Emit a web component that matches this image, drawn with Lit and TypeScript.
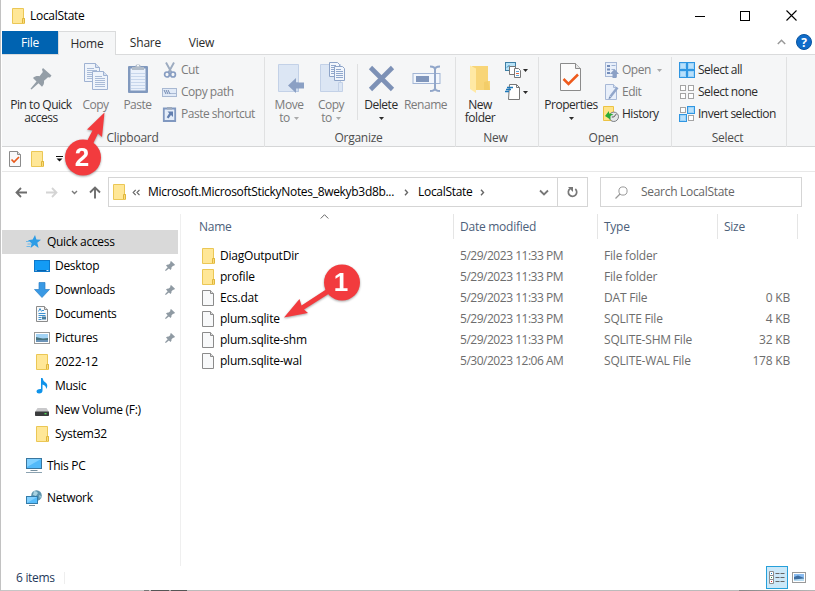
import { LitElement, html, svg, css, nothing } from "lit";
import { customElement, property } from "lit/decorators.js";

const pic = (w: number, h: number, body: unknown) =>
  html`<svg width=${w} height=${h} viewBox="0 0 ${w} ${h}">${body}</svg>`;

const sheet = (x: number, y: number) => svg`
  <path d="M${x + 0.5} ${y + 0.5}h11l4 4v14h-15z" fill="#eff4fb" stroke="#9fb2d2"/>
  <path d="M${x + 11.5} ${y + 0.5}v4h4" fill="#d5dfef" stroke="#9fb2d2"/>
  <path d="M${x + 3} ${y + 5.5}h7M${x + 3} ${y + 7.5}h10M${x + 3} ${y + 9.5}h10M${x + 3} ${y + 11.5}h10M${x + 3} ${y + 13.5}h10M${x + 3} ${y + 15.5}h10" stroke="#a9bbd7"/>`;

const smallPage = (body: unknown = nothing) => svg`
  <path d="M.5.5h8l3 3v12H.5z" fill="#f8f9fa" stroke="#8b8b8b"/>
  <path d="M8.500 .5v3h3" fill="#ddd" stroke="#8b8b8b"/>${body}`;

const bluePage = (x: number, y: number) => svg`
  <path d="M${x + 0.5} ${y + 0.5}h8l2 2v12h-10z" fill="#f2f6fc" stroke="#8ea4c8"/>
  <path d="M${x + 2} ${y + 3.5}h5M${x + 2} ${y + 5.5}h7M${x + 2} ${y + 7.5}h7M${x + 2} ${y + 9.5}h7M${x + 2} ${y + 11.5}h7" stroke="#91a8cc"/>`;

const tile = (x: number, y: number, on: boolean) => on
  ? svg`<rect x=${x + 0.5} y=${y + 0.5} width="7" height="7" fill="#b9e0fb" stroke="#2f96e2"/><rect x=${x + 1.5} y=${y + 1.5} width="5" height="5" fill="none" stroke="#8ccaf6" stroke-width=".6"/>`
  : svg`<rect x=${x + 1.5} y=${y + 1.5} width="5" height="5" fill="#fff" stroke="#a4a4a4"/>`;

const icons: Record<string, unknown> = {
  folder: pic(13, 16, svg`
    <path d="M.5.5h11v10h1v5H.5z" fill="#ffe797" stroke="#ebc755"/>
    <path d="M10.500 15v-4.500h2V15" fill="#fbdc7c" stroke="#dfb63c"/>`),
  file: pic(12, 16, smallPage()),
  propsSmall: pic(12, 16, smallPage(svg`<path d="M2.500 8.500l2.500 2.500 5-5" fill="none" stroke="#e9591b" stroke-width="1.700"/>`)),
  pinBig: pic(32, 32, svg`
    <path d="M18 6l8.500 7.500-1.500 2-2-.2-4 3.500c.4 2.500-.5 4.500-2 6l-3.500-3.500L6.500 27.500l-1-.8L11.500 19.500 8 16c2-1.800 4-2.300 6.500-1.800L17.800 10l-.8-2.500z" fill="#949ea7"/>`),
  pin: pic(10, 10, svg`
    <path d="M6 0l4 3.700-1 1.100-.8-.1L6.500 6.300c.2 1-.2 2-.9 2.700L3.900 7.400.8 10 0 9.300 2.700 6.200 1 4.500c.8-.8 1.700-1.100 2.800-.9L5.400 1.900 5.200 1z" fill="#8f9aa3"/>`),
  copy: pic(32, 32, svg`${sheet(4, 1)}${sheet(12, 9)}`),
  paste: pic(32, 32, svg`
    <rect x="6" y="4" width="20" height="27" rx="1" fill="#8199be"/>
    <rect x="8.500" y="6.500" width="15" height="22" fill="#eaf1fb"/>
    <path d="M9 11.500h14M9 14.500h14M9 17.500h14M9 20.500h14M9 23.500h14M9 26.500h14" stroke="#c8d7ec"/>
    <path d="M10 8V5h3.500V3.500q2.500-3 5 0V5H22v3z" fill="#b2bdca"/><circle cx="16" cy="3.500" r="1" fill="#fff"/>`),
  cut: pic(16, 16, svg`
    <path d="M4 .5l5.500 10M12 .5L6.500 10.500" stroke="#9cabc0" stroke-width="1.900"/>
    <ellipse cx="5" cy="12.500" rx="2.400" ry="2.500" fill="none" stroke="#879dc2" stroke-width="1.700"/>
    <ellipse cx="11" cy="12.500" rx="2.400" ry="2.500" fill="none" stroke="#879dc2" stroke-width="1.700"/>`),
  path: pic(16, 16, svg`
    <rect x=".5" y="4.500" width="14" height="8" fill="#e1eaf7" stroke="#a8b8d2"/>
    <path d="M2 6l2 4M4 6l2 4M6 6l2 4" stroke="#7088b0"/><path d="M8.500 9.500h1M10.500 9.500h1M12.500 9.500h1" stroke="#7088b0"/>`),
  shortcut: pic(16, 16, svg`
    <path d="M1.800 2.500h11.400v12.500H1.800z" fill="#e4edf9" stroke="#8098c0" stroke-width="1.800"/>
    <path d="M5 3.500V1h5v2.500z" fill="#9daabd"/>
    <path d="M5.500 5.500H11V11L9 9l-2.500 3.500-1.800-1.300L7.200 7.300z" fill="#627faf"/>`),
  move: pic(32, 32, svg`
    <path d="M5.500 2.500h20v27h-20z" fill="#dce6f4" stroke="#c3d1e7"/><path d="M21.500 20.500h4v9h-4z" fill="#cfdcef" stroke="#b5c7e1"/>
    <path d="M15 23.500l8-7.500v4.500h8v6h-8V31z" fill="#8ba0c4"/>`),
  copyTo: pic(32, 32, svg`
    <path d="M5.500 2.500h20v27h-20z" fill="#dce6f4" stroke="#c3d1e7"/><path d="M23.500 20.500h4v9h-4z" fill="#dce6f4" stroke="#c3d1e7"/>
    ${bluePage(14, 0)}${bluePage(19, 4)}`),
  del: pic(32, 32, svg`<path d="M5.500 5.500l22 22M27.500 5.500l-22 22" stroke="#7d91b6" stroke-width="4.600"/>`),
  rename: pic(32, 32, svg`
    <rect x="3" y="11.500" width="27" height="10" fill="#f2f6fc" stroke="#a2b5d5"/>
    <rect x="6" y="14" width="13" height="6" fill="#8096bc"/>
    <path d="M20 4.500q5 0 5 3V26q0 3-5 3M30 4.500q-5 0-5 3V26q0 3 5 3" fill="none" stroke="#91a6c9" stroke-width="2"/>`),
  newFolder: pic(32, 32, svg`
    <path d="M8 4h16v15h2v9H12z" fill="#f8d577"/><path d="M6 3.500l6 3V31l-6-4z" fill="#ffe9a4"/><path d="M20 20l4-1 2 9h-6z" fill="#f3cd68"/>`),
  newItem: pic(16, 17, svg`
    <rect x=".5" y=".5" width="10" height="8" fill="#b8e3f8" stroke="#3e7fa5"/><path d="M2 5.500l2-2 2 2" stroke="#2679ab" fill="none"/>
    <path d="M4.500 4.500h6v8h-6z" fill="#fff" stroke="#777"/><path d="M9.500 6.500h4l2 2v7h-6z" fill="#fff" stroke="#777"/>
    <path d="M11 9.500h3M11 13.500h3" stroke="#5da6db"/><path d="M11 11.500h3" stroke="#de6844"/>`),
  easy: pic(16, 16, svg`
    <path d="M4.500.5h7l3 3v12h-11z" fill="#fff" stroke="#777"/><path d="M11.500.5v3h3" fill="none" stroke="#777"/>
    <path d="M2 3.500h6M1 5.500h5M0 7.500h4" stroke="#1d78b9" stroke-width="1.300"/>`),
  props: pic(32, 32, svg`
    <path d="M5.500 1.500h15l5 5v22h-20z" fill="#fbfbfb" stroke="#8b8b8b"/><path d="M20.500 1.500v5h5" fill="#e6e6e6" stroke="#8b8b8b"/>
    <path d="M8.500 17l5 5 9.500-9.500" fill="none" stroke="#ee5a1c" stroke-width="2.500"/>`),
  open: pic(16, 16, svg`
    <rect x="2.500" y=".5" width="11" height="14" fill="#e8effa" stroke="#a7b8d6"/>
    <path d="M4 3h3v2H4zM4 6.500h3v2H4zM4 10h3v2H4z" fill="#748dba"/><path d="M8.500 3.500h4M8.500 7.500h3" stroke="#9db1d2"/>
    <path d="M11.500 7l4.500 5h-2.500v4h-4v-4H7z" fill="#8ba0c5"/>`),
  edit: pic(16, 16, svg`
    <path d="M2.500.5h8l3 3v12h-11z" fill="#e8effa" stroke="#a7b8d6"/><path d="M10.500.5v3h3" fill="#d4e0f1" stroke="#a7b8d6"/>
    <path d="M14.500 3.500l-7 9" stroke="#91a6ca" stroke-width="2.500"/><path d="M6.200 12.200l2.300 1.500-3 1.500z" fill="#7c92b8"/>`),
  history: pic(16, 16, svg`
    <path d="M.5.500h10v14H.5z" fill="#ffe488" stroke="#ecc344"/>
    <circle cx="10.800" cy="10.800" r="4.700" fill="#e4e6e8" stroke="#7a7f84"/><path d="M10.800 11l2.500-3M10.800 11h-2" stroke="#555"/>
    <path d="M2 10l4-5v2.500q3-.5 4.500 1.500Q8 9 7.500 10v3.500z" fill="#2bac37"/>`),
  selAll: pic(16, 16, svg`${tile(0, 0, true)}${tile(8, 0, true)}${tile(0, 8, true)}${tile(8, 8, true)}`),
  selNone: pic(16, 16, svg`${tile(0, 0, false)}${tile(8, 0, false)}${tile(0, 8, false)}${tile(8, 8, false)}`),
  selInv: pic(16, 16, svg`${tile(0, 0, false)}${tile(8, 0, true)}${tile(0, 8, true)}${tile(8, 8, false)}`),
  star: pic(16, 14, svg`
    <path d="M9 0l1.400 4.500 4.600.3-3.700 3 1.300 5.200L8.500 10 4.600 13l1-4.800L2 5.200l4.700-.6z" fill="#2c9ce6"/>
    <path d="M0 6.500h4M1.500 9h4M.5 11.500h4" stroke="#70b9e8"/>`),
  desktop: pic(16, 12, svg`<rect x=".5" y=".5" width="15" height="11" fill="#139bf5" stroke="#0d78ca"/><path d="M1 10.500h14" stroke="#0562ae"/><path d="M1.500 10.500h1M12.500 10.500h2" stroke="#d6eeff"/>`),
  down: pic(16, 16, svg`<path d="M5 .5h6v7h4.500L8 15.500.5 7.500H5z" fill="#3999e4" stroke="#2b80c7" stroke-width=".7"/>`),
  docs: pic(12, 16, smallPage(svg`
    <path d="M2.500 5.500l1.500-3 1.500 3M6 4.500h2M2.500 7.500h7M2.500 9.500h7M2.500 11.500h3M2.500 13.500h3" stroke="#3e91cf" fill="none"/><rect x="6" y="10.500" width="4" height="3" fill="#477d9f"/>`)),
  pictures: pic(16, 12, svg`<rect x=".5" y=".5" width="15" height="11" fill="#fff" stroke="#999"/><path d="M2 2h12v8H2z" fill="#a3d3f4"/><path d="M2 5l4 1 3 .5 5-.5v2H2z" fill="#48737e"/><path d="M2 8h12v2H2z" fill="#6c94b8"/>`),
  music: pic(12, 16, svg`<path d="M5 0h1.500q.5 3 3 4.500 2.500 2 1.500 5l-1 1.500q.5-3.500-3.500-4.500v6q0 3-3.500 3Q.5 15.500.5 13.500q0-2.700 4.500-2.500z" fill="#0f93ea"/>`),
  drive: pic(14, 12, svg`<path d="M2.500 4h9L14 8H0z" fill="#c9c9cb"/><rect y="7.500" width="14" height="4.500" rx=".7" fill="#3b3c3e"/><path d="M9.500 9.700h2" stroke="#51e35a" stroke-width="1.300"/>`),
  pc: pic(16, 16, svg`<rect x=".5" y=".5" width="15" height="10" fill="#52b9f9" stroke="#39769f"/><path d="M1 1h14L1 9z" fill="#80d0ff"/><path d="M4.500 12.500h7" stroke="#77909f"/><path d="M0 14.500h16" stroke="#8ba2b0"/>`),
  network: pic(16, 16, svg`<circle cx="10.500" cy="5.500" r="5.300" fill="#5e94ad"/><path d="M8 1q3 0 4 2l-2 3-3-1zM13 5l2 1-1 3z" fill="#a9d3e2"/><rect x=".5" y="6.500" width="11" height="7" fill="#57bdfb" stroke="#347ca9"/><path d="M1 7h10l-10 6z" fill="#83d1ff"/><path d="M3 15.500h6" stroke="#7c909b"/>`),
  back: pic(13, 11, svg`<path d="M1.500 5.500H12M6 1L1.500 5.500 6 10" fill="none" stroke="#6d6d6d" stroke-width="1.800"/>`),
  forward: pic(13, 11, svg`<path d="M11.500 5.500H1M7 1l4.500 4.500L7 10" fill="none" stroke="#d4d4d4" stroke-width="1.800"/>`),
  up: pic(12, 13, svg`<path d="M6 12.500V1.500M1 6.500l5-5 5 5" fill="none" stroke="#6d6d6d" stroke-width="1.900"/>`),
  chevS: pic(7, 5, svg`<path d="M1 1l2.500 2.500L6 1" fill="none" stroke="#7a7a7a" stroke-width="1.400"/>`),
  chev: pic(10, 7, svg`<path d="M1 1.500l4 4 4-4" fill="none" stroke="#777" stroke-width="1.800"/>`),
  right: pic(5, 7, svg`<path d="M1 .8l2.500 2.700L1 6.200" fill="none" stroke="#666" stroke-width="1.400"/>`),
  dblLeft: pic(8, 7, svg`<path d="M3.700.8L1.200 3.500l2.500 2.700M7.500.8L5 3.500l2.500 2.700" fill="none" stroke="#666" stroke-width="1.200"/>`),
  refresh: pic(11, 12, svg`<path d="M8.300 3A4.200 4.200 0 1 1 3 2.800" fill="none" stroke="#777" stroke-width="1.700"/><path d="M1 1h5v5z" fill="#777"/>`),
  search: pic(13, 13, svg`<circle cx="8" cy="5" r="4.100" fill="none" stroke="#999"/><path d="M5 8L.5 12.500" stroke="#999" stroke-width="1.300"/>`),
  sortUp: pic(9, 5, svg`<path d="M.7 4.500l3.800-3.800 3.800 3.800" fill="none" stroke="#666"/>`),
  collapse: pic(9, 6, svg`<path d="M.8 5l3.700-3.700L8.200 5" fill="none" stroke="#999" stroke-width="1.500"/>`),
  help: pic(16, 16, svg`<circle cx="8" cy="8" r="7.500" fill="#0f6cc9" stroke="#0a549f"/><text class="q" x="8" y="12.500" text-anchor="middle">?</text>`),
  tri: pic(5, 3, svg`<path d="M0 0h5L2.500 3z" fill="currentColor"/>`),
  qat: pic(7, 6, svg`<path d="M0 .5h7" stroke="#111"/><path d="M.5 2.500h6l-3 3z" fill="#111"/>`),
  min: pic(10, 10, svg`<path d="M0 5.500h10" stroke="#000"/>`),
  max: pic(10, 10, svg`<rect x=".5" y=".5" width="9" height="9" fill="none" stroke="#000"/>`),
  close: pic(11, 11, svg`<path d="M.5.500l10 10M10.500.500l-10 10" stroke="#000" stroke-width="1.100"/>`),
  details: pic(16, 14, svg`
    <path d="M.5.500h4v4h-4zM.5 4.500h4v4h-4zM.5 8.500h4v4h-4z" fill="#fff" stroke="#8c8c8c"/>
    <path d="M2 2.500h1" stroke="#1279c5"/><path d="M2 6.500h1" stroke="#258c43"/><path d="M2 10.500h1" stroke="#e41f26"/>
    <path d="M6.500 2.500h4M11.500 2.500h4M6.500 6.500h4M11.500 6.500h4M6.500 10.500h4M11.500 10.500h4" stroke="#666"/>`),
  thumbs: pic(14, 11, svg`<rect x=".5" y=".5" width="13" height="10" fill="#fff" stroke="#999"/><path d="M2 2h10v7H2z" fill="#8abcf0"/><path d="M2 5l4-1.500 6 2.500v3H2z" fill="#3e6ea0"/><path d="M2 7.500l10-1V9H2z" fill="#b8dcf2"/>`),
};

const nav = [
  ["desktop", "Desktop", true], ["down", "Downloads", true], ["docs", "Documents", true], ["pictures", "Pictures", true],
  ["folder", "2022-12", false], ["music", "Music", false], ["drive", "New Volume (F:)", false], ["folder", "System32", false],
] as const;

const files = [
  ["folder", "DiagOutputDir", "5/29/2023 11:33 PM", "File folder", ""],
  ["folder", "profile", "5/29/2023 11:33 PM", "File folder", ""],
  ["file", "Ecs.dat", "5/29/2023 11:33 PM", "DAT File", "0 KB"],
  ["file", "plum.sqlite", "5/29/2023 11:33 PM", "SQLITE File", "4 KB"],
  ["file", "plum.sqlite-shm", "5/29/2023 11:33 PM", "SQLITE-SHM File", "32 KB"],
  ["file", "plum.sqlite-wal", "5/30/2023 12:06 AM", "SQLITE-WAL File", "178 KB"],
];

const base = css`
  * { box-sizing: border-box; }
  svg { display: block; flex: none; }
  .q { font: bold 12px "Open Sans", sans-serif; fill: #fff; }
`;

@customElement("ribbon-big")
class RibbonBig extends LitElement {
  @property() icon = "";
  @property() label = "";
  @property() second = "";
  @property({ type: Boolean }) arrow = false;
  @property({ type: Boolean }) off = false;
  static styles = [base, css`
    :host { display: flex; flex-direction: column; align-items: center; padding-top: 7px; color: #2b2b2b; text-align: center; white-space: nowrap; line-height: 13px; }
    :host([off]) { color: #7b7b7b; }
    .label { margin-top: 4px; }
    .second { display: flex; align-items: center; justify-content: center; gap: 4px; height: 13px; }
    .tri { padding-top: 1px; }
    :host([off]) .tri { color: #aaa; }
  `];
  render() {
    return html`${icons[this.icon]}<div class="label">${this.label}</div>
      <div class="second">${this.second}${this.arrow ? html`<span class="tri">${icons.tri}</span>` : nothing}</div>`;
  }
}

@customElement("ribbon-item")
class RibbonItem extends LitElement {
  @property() icon = "";
  @property() label = "";
  @property({ type: Boolean }) arrow = false;
  @property({ type: Boolean }) off = false;
  static styles = [base, css`
    :host { display: flex; align-items: center; height: 22px; gap: 3px; color: #2b2b2b; white-space: nowrap; }
    :host([off]) { color: #7b7b7b; }
    .tri { margin-left: 3px; }
    .tri.tight { margin-left: -1px; }
    :host([off]) .tri { color: #aaa; }
  `];
  render() {
    return html`${icons[this.icon]}${this.label ? html`<span>${this.label}</span>` : nothing}${this.arrow ? html`<span class=${this.label ? "tri" : "tri tight"}>${icons.tri}</span>` : nothing}`;
  }
}

@customElement("app-root")
class AppRoot extends LitElement {
  static styles = [base, css`
    :host { display: flex; flex-direction: column; position: relative; width: 815px; height: 591px; overflow: hidden; background: #fff;
      border-left: 1px solid #c2c2c2; padding-left: 1px; font: 12px/16px "Open Sans", "Noto Sans", sans-serif; letter-spacing: -0.3px; color: #000; }
    .row { display: flex; align-items: center; }
    .title { height: 31px; padding: 0 20px 0 10px; gap: 5px; flex: none; }
    .title .name { flex: 1; }
    .title .winbtns { display: flex; align-items: center; gap: 35px; }
    .title .winbtns svg:last-child { margin-left: 1px; }
    .tabs { height: 24px; flex: none; display: flex; border-bottom: 1px solid #dadbdc; letter-spacing: -0.2px; }
    .tab { height: 23px; display: flex; align-items: center; justify-content: center; color: #2b2b2b; padding-top: 1px; }
    .tab.file { width: 56px; background: #0063b1; color: #fff; }
    .tab.home { width: 58px; height: 24px; border: 1px solid #dadbdc; border-bottom: 0; background: #f5f6f7; padding-bottom: 1px; }
    .tab.share { width: 59px; }
    .tab.view { width: 53px; }
    .tabs .end { margin-left: auto; display: flex; align-items: center; gap: 10px; padding: 0 5px 2px 0; }
    .ribbon { height: 92px; flex: none; display: grid; grid-template-columns: 263px 191px 83px 133px 115px 1fr; background: #f5f6f7; border-bottom: 1px solid #d5d6d7; letter-spacing: -0.48px; }
    .group { display: flex; flex-direction: column; border-right: 1px solid #e0e1e2; margin: 2px 0 3px; }
    .tools { display: flex; height: 72px; margin-top: -2px; }
    .caption { text-align: center; color: #4d4d4d; line-height: 18px; padding-top: 2px; letter-spacing: -0.25px; }
    .stack { padding-top: 4px; }
    .g1 { padding-left: 5px; } .g1 .caption { padding-right: 6px; }
    .w68 { width: 68px; } .w41 { width: 41px; } .w43 { width: 43px; } .w42 { width: 42px; } .w40 { width: 40px; } .w49 { width: 49px; } .w56 { width: 56px; }
    .g1 .stack { padding-left: 3px; }
    .g2 { padding-left: 3px; } .g2 .caption { padding-right: 6px; }
    .vline { width: 1px; background: #dfe0e1; height: 56px; margin: 9px 3px 0 5px; }
    .g3 { padding-left: 4px; } .g3 .stack { padding-left: 5px; } .g3 .caption { padding-right: 7px; }
    .g4 { padding-left: 4px; } .g4 .stack { padding-left: 4px; } .g4 .caption { padding-right: 7px; }
    .g5 .stack { padding-left: 7px; } .g5 .caption { padding-right: 3px; }
    .qat { height: 25px; flex: none; padding-left: 7px; border-bottom: 1px solid #e8e8e8; gap: 10px; }
    .qat .more { margin-left: 2px; }
    .bar { height: 40px; flex: none; padding: 0 13px 0 13px; }
    .bar .fwd { margin-left: 17px; } .bar .recent { margin-left: 13px; } .bar .upb { margin-left: 11px; margin-right: 7px; }
    .address { width: 480px; height: 30px; border: 1px solid #d5d5d5; padding-left: 4px; }
    .address .dl { margin: 0 8px 0 6px; }
    .address .p1 { width: 247px; letter-spacing: -0.31px; white-space: nowrap; }
    .address .sep { margin: 0 9px 0 9px; }
    .address .last { margin-left: 8px; flex: 1; }
    .refresh { width: 30px; height: 28px; margin-left: 8px; border-left: 1px solid #d5d5d5; display: flex; align-items: center; justify-content: center; }
    .find { width: 202px; height: 30px; margin-left: 12px; border: 1px solid #d5d5d5; padding-left: 14px; gap: 13px; color: #666; }
    .main { flex: 1; display: grid; grid-template-columns: 179px 1fr; min-height: 0; }
    .nav { border-right: 1px solid #efefef; margin: 2px 0 0; padding-top: 16px; }
    .nav .item { display: flex; align-items: center; height: 24px; width: 176px; padding: 0 3px 0 32px; }
    .nav .ic { width: 16px; display: flex; justify-content: center; margin-right: 5px; }
    .nav .top { padding-left: 24px; }
    .nav .gap { margin-top: 8px; }
    .nav .sel { background: #d9d9d9; }
    .nav .pin { margin-left: auto; }
    .list { padding-top: 2px; }
    .head, .line { display: grid; grid-template-columns: 273px 144px 120px 80px; }
    .head { height: 25px; color: #4c607a; letter-spacing: -0.25px; }
    .head > div { border-right: 1px solid #e5e5e5; padding: 5px 0 0 6px; display: flex; }
    .head .first { padding-left: 18px; }
    .head .caret { margin: -5px 0 0 88px; }
    .rows { padding-top: 6px; color: #6d6d6d; letter-spacing: -0.2px; }
    .line { height: 21px; align-items: center; }
    .line > div { padding-left: 6px; }
    .line .fn { display: flex; align-items: center; padding-left: 21px; color: #000; letter-spacing: -0.22px; }
    .line .date { letter-spacing: -0.48px; }
    .line .fi { width: 13px; margin-right: 5px; }
    .line .size { text-align: right; padding-right: 8px; }
    .status { height: 24px; flex: none; padding: 0 11px 0 14px; color: #1e395b; }
    .status .n { width: 49px; height: 12px; line-height: 12px; border-right: 1px solid #eee; }
    .viewsel { width: 22px; height: 23px; background: #cce8f8; border: 1px solid #26a0da; display: flex; align-items: center; justify-content: center; margin: -1px 0 0 auto; }
    .thumb { margin: -2px 0 0 4px; }
    .edge { height: 1px; flex: none; margin-left: -1px; background: linear-gradient(90deg, #c6c6c6 143px, #777 143px 148px, #c6c6c6 148px 150px, #555 150px 168px, #aaa 168px 170px, #555 170px 186px, #bbb 186px 738px, #888 738px, #b8b8b8); }
    .marks { position: absolute; left: -1px; top: 0; filter: drop-shadow(0 1px 1px rgba(0,0,0,.35)); }
    .marks text { font: bold 26px "Liberation Sans", Arial, sans-serif; fill: #fff; letter-spacing: 0; }
  `];
  render() {
    return html`
      <div class="row title">${icons.folder}<span class="name">LocalState</span>
        <div class="winbtns">${icons.min}${icons.max}${icons.close}</div></div>
      <div class="tabs">
        <div class="tab file">File</div><div class="tab home">Home</div><div class="tab share">Share</div><div class="tab view">View</div>
        <div class="end">${icons.collapse}${icons.help}</div>
      </div>
      <div class="ribbon">
        <div class="group g1"><div class="tools">
          <ribbon-big class="w68" icon="pinBig" label="Pin to Quick" second="access"></ribbon-big>
          <ribbon-big class="w41" icon="copy" label="Copy" off></ribbon-big>
          <ribbon-big class="w43" icon="paste" label="Paste" off></ribbon-big>
          <div class="stack"><ribbon-item icon="cut" label="Cut" off></ribbon-item><ribbon-item icon="path" label="Copy path" off></ribbon-item><ribbon-item icon="shortcut" label="Paste shortcut" off></ribbon-item></div>
        </div><div class="caption">Clipboard</div></div>
        <div class="group g2"><div class="tools">
          <ribbon-big class="w42" icon="move" label="Move" second="to" arrow off></ribbon-big>
          <ribbon-big class="w42" icon="copyTo" label="Copy" second="to" arrow off></ribbon-big>
          <div class="vline"></div>
          <ribbon-big class="w40" icon="del" label="Delete" arrow></ribbon-big>
          <ribbon-big class="w49" icon="rename" label="Rename" off></ribbon-big>
        </div><div class="caption">Organize</div></div>
        <div class="group g3"><div class="tools">
          <ribbon-big class="w40" icon="newFolder" label="New" second="folder"></ribbon-big>
          <div class="stack"><ribbon-item icon="newItem" arrow></ribbon-item><ribbon-item icon="easy" arrow></ribbon-item></div>
        </div><div class="caption">New</div></div>
        <div class="group g4"><div class="tools">
          <ribbon-big class="w56" icon="props" label="Properties" arrow></ribbon-big>
          <div class="stack"><ribbon-item icon="open" label="Open" arrow off></ribbon-item><ribbon-item icon="edit" label="Edit" off></ribbon-item><ribbon-item icon="history" label="History"></ribbon-item></div>
        </div><div class="caption">Open</div></div>
        <div class="group g5"><div class="tools">
          <div class="stack"><ribbon-item icon="selAll" label="Select all"></ribbon-item><ribbon-item icon="selNone" label="Select none"></ribbon-item><ribbon-item icon="selInv" label="Invert selection"></ribbon-item></div>
        </div><div class="caption">Select</div></div>
      </div>
      <div class="row qat">${icons.propsSmall}${icons.folder}<span class="more">${icons.qat}</span></div>
      <div class="row bar">
        ${icons.back}<span class="fwd">${icons.forward}</span><span class="recent">${icons.chevS}</span><span class="upb">${icons.up}</span>
        <div class="row address">${icons.folder}<span class="dl">${icons.dblLeft}</span><span class="p1">Microsoft.MicrosoftStickyNotes_8wekyb3d8b...</span>
          <span class="sep">${icons.right}</span><span>LocalState</span><span class="last">${icons.right}</span>${icons.chev}
          <div class="refresh">${icons.refresh}</div></div>
        <div class="row find">${icons.search}<span>Search LocalState</span></div>
      </div>
      <div class="main">
        <div class="nav">
          <div class="item top sel"><span class="ic">${icons.star}</span>Quick access</div>
          ${nav.map(([i, t, p]) => html`<div class="item"><span class="ic">${icons[i]}</span>${t}${p ? html`<span class="pin">${icons.pin}</span>` : nothing}</div>`)}
          <div class="item top gap"><span class="ic">${icons.pc}</span>This PC</div>
          <div class="item top gap"><span class="ic">${icons.network}</span>Network</div>
        </div>
        <div class="list">
          <div class="head"><div class="first">Name<span class="caret">${icons.sortUp}</span></div><div>Date modified</div><div>Type</div><div>Size</div></div>
          <div class="rows">${files.map(([i, n, d, t, s]) => html`<div class="line">
            <div class="fn"><span class="fi">${icons[i]}</span>${n}</div><div class="date">${d}</div><div>${t}</div><div class="size">${s}</div></div>`)}</div>
        </div>
      </div>
      <div class="row status"><span class="n">6 items</span><div class="viewsel">${icons.details}</div><span class="thumb">${icons.thumbs}</span></div>
      <div class="edge"></div>
      <svg class="marks" width="400" height="350" viewBox="0 0 400 350">
        <path d="M104.500 112.500L102 137 98 133.500 92 146 86 143 92.500 130.500 87 129.500z" fill="#f23b3e"/>
        <circle cx="83" cy="157.500" r="18" fill="#f23b3e"/><text x="82" y="166" text-anchor="middle">2</text>
        <path d="M284 317.500L299.500 299 301.500 305.500 326 289.500 328.500 294 304 309.500 308 313z" fill="#f23b3e"/>
        <circle cx="342" cy="282.500" r="18" fill="#f23b3e"/><text x="341" y="291" text-anchor="middle">1</text>
      </svg>`;
  }
}
